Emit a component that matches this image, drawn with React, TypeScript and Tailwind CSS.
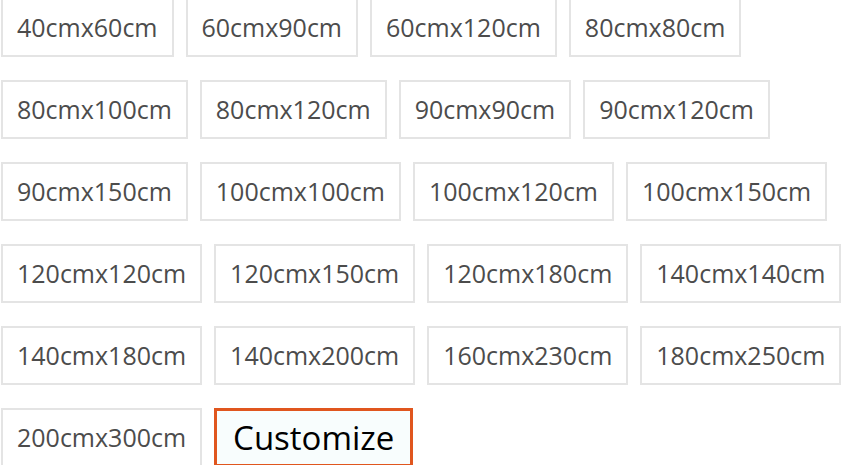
const sizes = [
  "40cmx60cm",
  "60cmx90cm",
  "60cmx120cm",
  "80cmx80cm",
  "80cmx100cm",
  "80cmx120cm",
  "90cmx90cm",
  "90cmx120cm",
  "90cmx150cm",
  "100cmx100cm",
  "100cmx120cm",
  "100cmx150cm",
  "120cmx120cm",
  "120cmx150cm",
  "120cmx180cm",
  "140cmx140cm",
  "140cmx180cm",
  "140cmx200cm",
  "160cmx230cm",
  "180cmx250cm",
  "200cmx300cm",
];

export default function App() {
  return (
    <div className="h-[465px] w-[850px] overflow-hidden bg-white">
      <div className="-mt-[2px] ml-px flex w-[849px] flex-wrap gap-x-[12px] gap-y-[23px] font-['Open_Sans',sans-serif]">
        {sizes.map((s) => (
          <button
            key={s}
            type="button"
            className="flex h-[59px] items-center border-2 border-[#e4e4e4] bg-white px-[14px] text-[25px] text-[#4c4c4c]"
          >
            {s}
          </button>
        ))}
        <button
          type="button"
          className="flex h-[59px] items-center border-[3px] border-[#e0561e] bg-[#f8fdfd] px-[16px] text-[33px] text-black"
        >
          Customize
        </button>
      </div>
    </div>
  );
}
